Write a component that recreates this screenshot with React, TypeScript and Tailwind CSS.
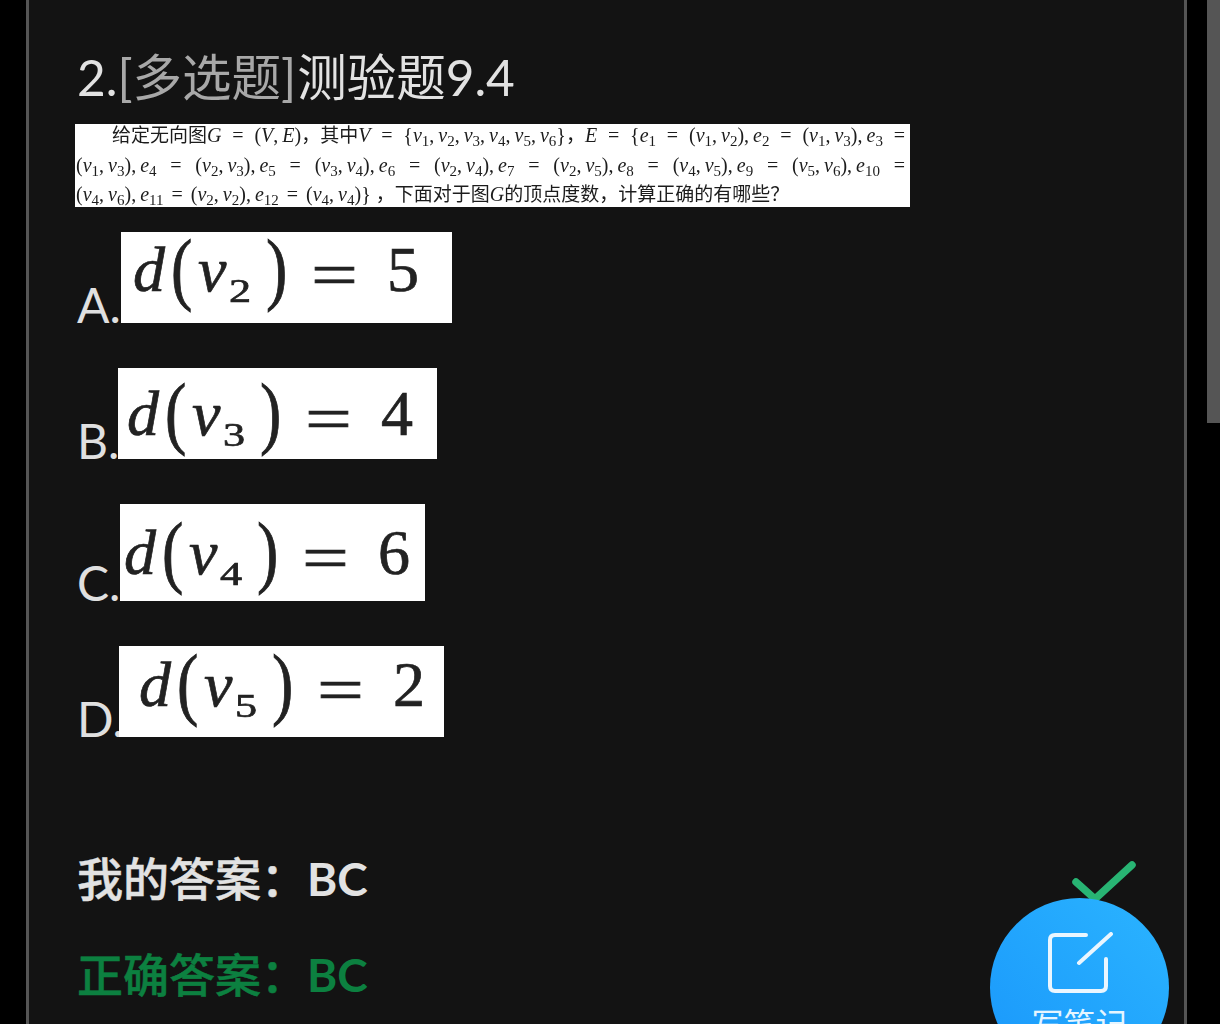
const uiFont = { fontFamily: '"Lato", "Noto Sans CJK SC", sans-serif' };
const mathFont = { fontFamily: '"Liberation Serif", "Noto Sans CJK SC", serif' };

function V({ n }: { n: string }) {
  return (
    <i>
      v<sub className="not-italic">{n}</sub>
    </i>
  );
}

function E({ n }: { n: string }) {
  return (
    <i>
      e<sub className="not-italic">{n}</sub>
    </i>
  );
}

function Comma() {
  return <span className="mr-[4px]">,</span>;
}

// inline-block keeps justify from pulling the chinese characters apart
function Zh({ children }: { children: string }) {
  return <span className="inline-block text-[19px]">{children}</span>;
}

function Pair({ a, b }: { a: string; b: string }) {
  return (
    <>
      (<V n={a} />
      <Comma />
      <V n={b} />)
    </>
  );
}

function QuestionImage() {
  return (
    <div
      className="-ml-[2px] flex h-[83px] w-[835px] flex-col justify-center bg-white text-[20px] leading-[29.5px] text-[#1c1c1c] blur-[0.4px] [word-spacing:3px]"
      style={mathFont}
    >
      <div className="whitespace-nowrap pl-[37px] pr-[5px] [text-align-last:justify]">
        <Zh>给定无向图</Zh>
        <i>G</i> = (<i>V</i>
        <Comma />
        <i>E</i>)<Zh>，其中</Zh>
        <i>V</i> = {"{"}
        <V n="1" />
        <Comma />
        <V n="2" />
        <Comma />
        <V n="3" />
        <Comma />
        <V n="4" />
        <Comma />
        <V n="5" />
        <Comma />
        <V n="6" />
        {"}"}
        <Zh>，</Zh>
        <i>E</i> = {"{"}
        <E n="1" /> = <Pair a="1" b="2" />
        <Comma />
        <E n="2" /> = <Pair a="1" b="3" />
        <Comma />
        <E n="3" /> =
      </div>
      <div className="whitespace-nowrap pl-[1px] pr-[5px] [text-align-last:justify]">
        <Pair a="1" b="3" />
        <Comma />
        <E n="4" /> = <Pair a="2" b="3" />
        <Comma />
        <E n="5" /> = <Pair a="3" b="4" />
        <Comma />
        <E n="6" /> = <Pair a="2" b="4" />
        <Comma />
        <E n="7" /> = <Pair a="2" b="5" />
        <Comma />
        <E n="8" /> = <Pair a="4" b="5" />
        <Comma />
        <E n="9" /> = <Pair a="5" b="6" />
        <Comma />
        <E n="10" /> =
      </div>
      <div className="whitespace-nowrap pl-[1px]">
        <Pair a="4" b="6" />
        <Comma />
        <E n="11" /> = <Pair a="2" b="2" />
        <Comma />
        <E n="12" /> = <Pair a="4" b="4" />
        <span className="mr-[5px]">{"}"}</span>
        <Zh>，下面对于图</Zh>
        <i>G</i>
        <Zh>的顶点度数，计算正确的有哪些？</Zh>
      </div>
    </div>
  );
}

const options = [
  { letter: "A", sub: "2", value: "5", box: "ml-[2px] h-[91px] w-[331px] pl-[12px] pt-[6px]" },
  { letter: "B", sub: "3", value: "4", box: "-ml-[1px] h-[91px] w-[319px] pl-[9px] pt-[14px]" },
  { letter: "C", sub: "4", value: "6", box: "ml-[1px] h-[97px] w-[305px] pl-[4px] pt-[17px]" },
  { letter: "D", sub: "5", value: "2", box: "h-[91px] w-[325px] pl-[20px] pt-[7px]" },
];

function Option({ letter, sub, value, box }: { letter: string; sub: string; value: string; box: string }) {
  return (
    <div className="mb-[45px] flex items-end">
      <span className="-mb-[6px] w-[42px] text-[48px] font-normal leading-none text-[#e0e0e0]">{letter}.</span>
      <div className={`bg-white text-[#222] blur-[0.7px] ${box}`} style={mathFont}>
        <div className="flex items-baseline text-[64px] leading-none [-webkit-text-stroke:0.7px_#222]">
          <i className="w-[38px]">d</i>
          <span className="inline-block w-[27px] origin-center translate-y-[-1px] scale-y-[1.25]">(</span>
          <i className="w-[31px]">v</i>
          <span className="w-[37px]">
            <span className="inline-block origin-left translate-y-[11px] scale-x-[1.3] text-[34px]">{sub}</span>
          </span>
          <span className="inline-block w-[45px] origin-center translate-y-[-1px] scale-y-[1.25]">)</span>
          <span className="w-[76px]">
            <span className="inline-block origin-left translate-y-[5px] scale-x-[1.3]">=</span>
          </span>
          <span>{value}</span>
        </div>
      </div>
    </div>
  );
}

function NoteButton() {
  return (
    <div className="absolute left-[961px] top-[860px] h-[200px] w-[190px]">
      <svg className="absolute left-[20px] top-0" width="130" height="60" viewBox="0 0 130 60" fill="none">
        <path d="M66 22 L85 39 L122 5" stroke="#28b473" strokeWidth="7.5" strokeLinecap="round" strokeLinejoin="round" />
      </svg>
      <div className="absolute left-0 top-[38px] flex h-[179px] w-[179px] flex-col items-center rounded-full bg-gradient-to-tr from-[#1a97fb] to-[#2bb4ff] pt-[34px]">
        <svg width="68" height="62" viewBox="0 0 68 62" fill="none" className="ml-[3px]">
          <path
            d="M39 3 H8 Q3 3 3 8 V54 Q3 59 8 59 H54 Q59 59 59 54 V27"
            stroke="#eaf6ff"
            strokeWidth="4"
            strokeLinecap="round"
          />
          <path d="M32 31 L64 2" stroke="#eaf6ff" strokeWidth="4" strokeLinecap="round" />
        </svg>
        <span className="mt-[14px] text-[32px] leading-none text-[#e6f5ff]" style={uiFont}>
          写笔记
        </span>
      </div>
    </div>
  );
}

export default function App() {
  return (
    <div className="flex h-screen w-full overflow-hidden bg-black" style={uiFont}>
      <div className="w-[26px] shrink-0"></div>
      <div className="relative h-full w-[1161px] shrink-0 overflow-hidden border-x-[3px] border-[#555] bg-[#131313] pl-[48px] pt-[46px]">
        <h1 className="h-[78px] text-[49.5px] font-normal leading-[62px] text-[#e2e2e2]">
          2.<span className="mr-[1px] text-[#a8a8a8]">[多选题]</span>测验题9.4
        </h1>
        <QuestionImage />
        <div className="mt-[25px]">
          {options.map((o) => (
            <Option key={o.letter} {...o} />
          ))}
        </div>
        <div className="mt-[112px] text-[46px] font-medium leading-[60px] text-[#e2e2e2] [-webkit-text-stroke:0.5px_#e2e2e2]">
          我的答案：<span className="font-bold [-webkit-text-stroke:0]">BC</span>
        </div>
        <div className="mt-[36px] text-[46px] font-medium leading-[60px] text-[#0c8040] [-webkit-text-stroke:0.5px_#0c8040]">
          正确答案：<span className="font-bold [-webkit-text-stroke:0]">BC</span>
        </div>
        <NoteButton />
      </div>
      <div className="flex flex-1 justify-end">
        <div className="h-[423px] w-[13px] bg-[#555]"></div>
      </div>
    </div>
  );
}
